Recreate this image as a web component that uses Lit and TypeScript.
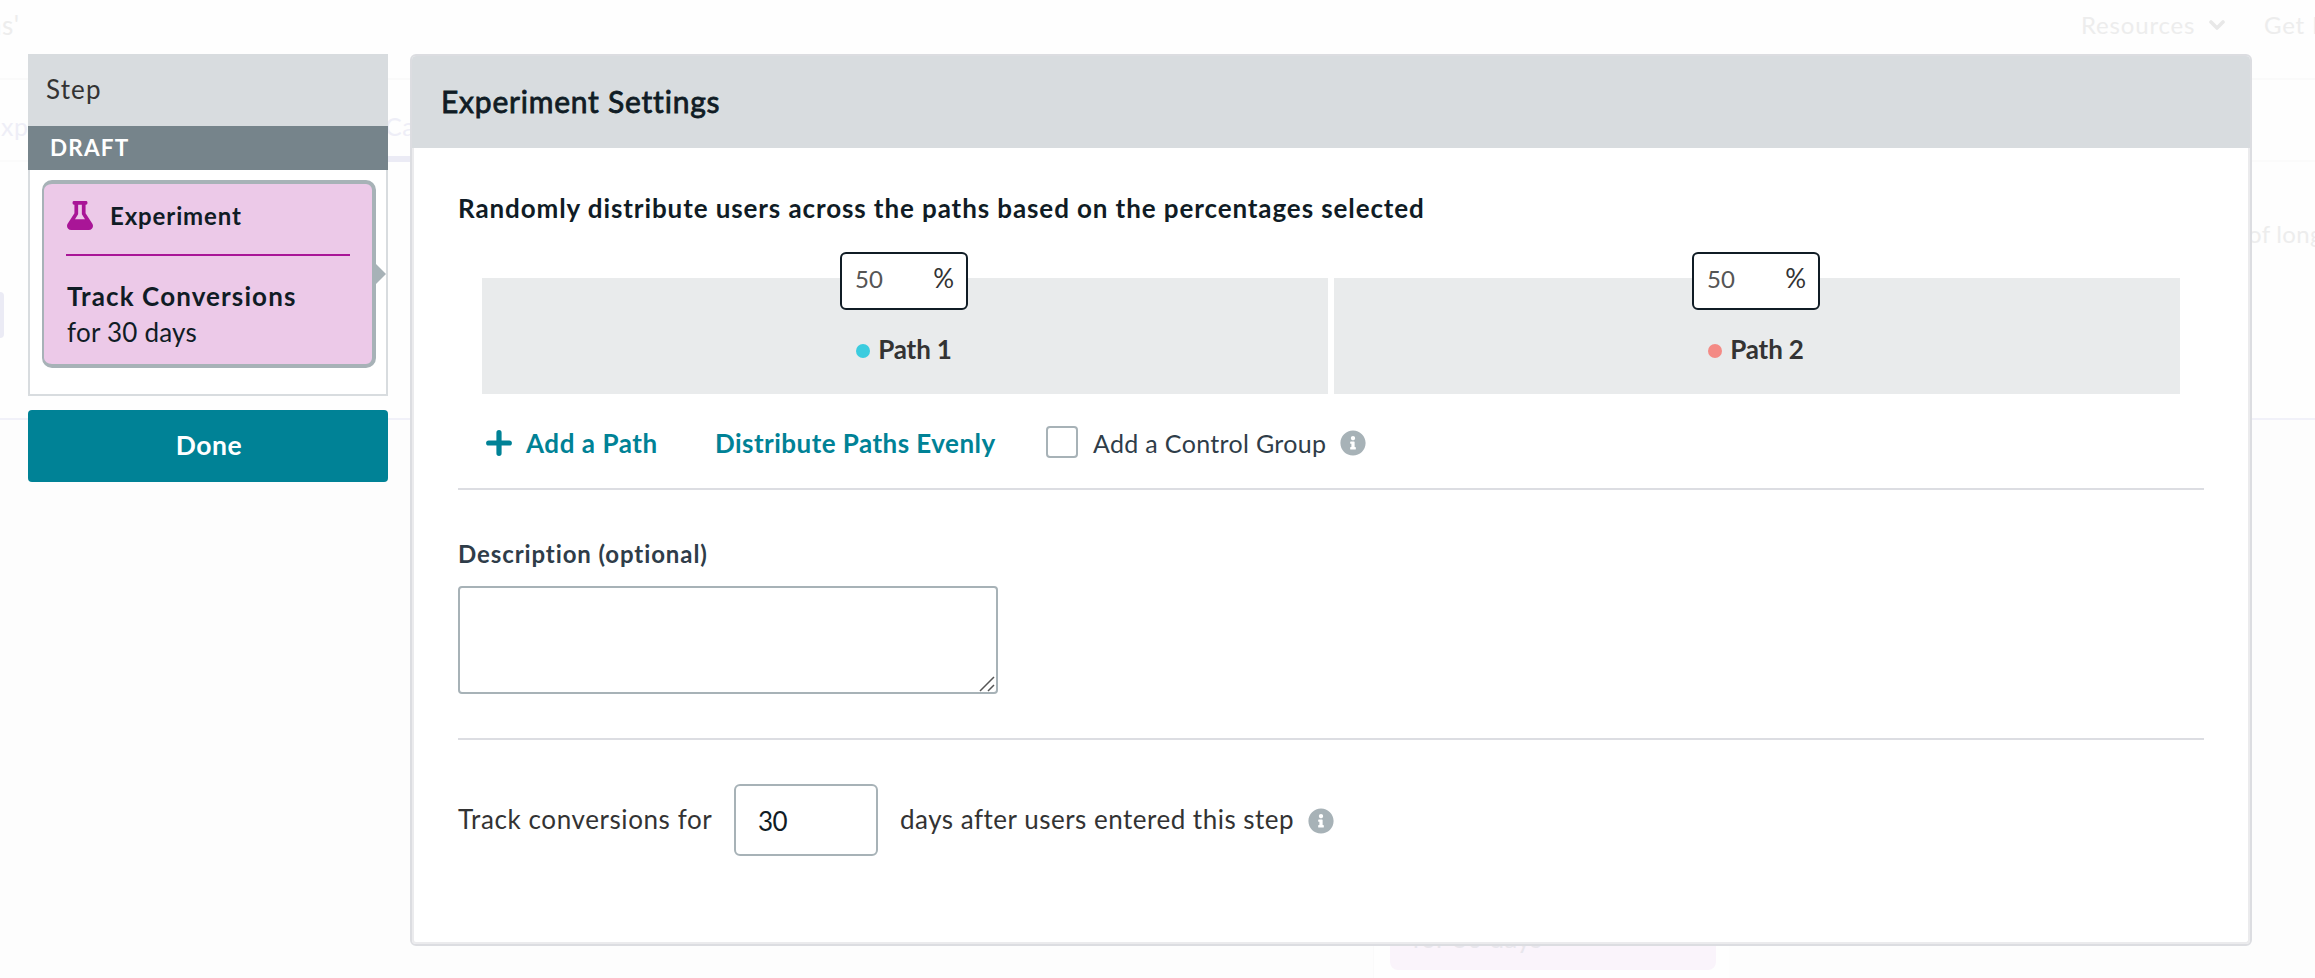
import { LitElement, html, css, svg } from "lit";
import { customElement, property } from "lit/decorators.js";
import { styleMap } from "lit/directives/style-map.js";

const infoIcon = html`<svg width="26" height="26" viewBox="0 0 512 512" fill="#a7b2b7">${svg`<path d="M256 8C119.043 8 8 119.083 8 256c0 136.997 111.043 248 248 248s248-111.003 248-248C504 119.083 392.957 8 256 8zm0 110c23.196 0 42 18.804 42 42s-18.804 42-42 42-42-18.804-42-42 18.804-42 42-42zm56 254c0 6.627-5.373 12-12 12h-88c-6.627 0-12-5.373-12-12v-24c0-6.627 5.373-12 12-12h12v-64h-12c-6.627 0-12-5.373-12-12v-24c0-6.627 5.373-12 12-12h64c6.627 0 12 5.373 12 12v100h12c6.627 0 12 5.373 12 12v24z"/>`}</svg>`;

/* Faded page that shows around the dialog. */
@customElement("page-backdrop")
class PageBackdrop extends LitElement {
  static styles = css`
    :host { display: flex; flex-direction: column; height: 978px; overflow: hidden; background: #fefefe; white-space: nowrap; color: #ededed; font: 400 24px/30px Lato, sans-serif; }
    .top { display: flex; align-items: flex-start; height: 80px; box-sizing: border-box; padding-top: 10px; border-bottom: 2px solid #fafafa; }
    .top > * { flex: none; }
    .title { width: 2081px; text-indent: -13px; letter-spacing: 0.5px; font-size: 26px; }
    .res { letter-spacing: 0.82px; width: 128px; }
    .chev { margin: 9px 39px 0 0; }
    .help { letter-spacing: 0.8px; }
    .tabs { display: flex; height: 82px; box-sizing: border-box; border-bottom: 2px solid #fbfbfb; color: #eeeef7; font-size: 25px; }
    .tab { padding-top: 31px; box-sizing: border-box; height: 82px; letter-spacing: 0.6px; }
    .first { width: 385px; text-indent: -14px; }
    .active { width: 60px; border-bottom: 6px solid #ebebf5; }
    .main { height: 256px; display: flex; justify-content: space-between; border-bottom: 2px solid #f1f1f9; }
    .pill { width: 4px; height: 46px; margin-top: 130px; background: #ebebf5; border-radius: 0 5px 5px 0; }
    .note { width: 67px; padding-top: 57px; font-size: 24px; letter-spacing: 0.3px; }
    .canvas { flex: 1; background: #fdfdfd; display: flex; align-items: flex-end; padding-left: 1373px; }
    .lane { background: #fefefe; height: 100px; width: 356px; padding: 0 0 0 16px; box-sizing: border-box; border-left: 1px solid #fafafa; }
    .node { width: 326px; height: 92px; box-sizing: border-box; padding: 46px 0 0 22px; background: #faf4fb; border-radius: 0 0 8px 8px; color: #e8e6ec; font-size: 26px; line-height: 28px; letter-spacing: 0.23px; }
  `;
  render() {
    return html`
      <div class="top">
        <span class="title">ns'</span><span class="res">Resources</span>
        <svg class="chev" width="16" height="12" viewBox="0 0 16 12"><path d="M2 3l6 6 6-6" fill="none" stroke="#e8e8e8" stroke-width="3.6" stroke-linecap="round" stroke-linejoin="round"/></svg>
        <span class="help">Get H</span>
      </div>
      <div class="tabs"><span class="tab first">Exp</span><span class="tab active">Ca</span></div>
      <div class="main"><span class="pill"></span><span class="note">of long</span></div>
      <div class="canvas"><div class="lane"><div class="node">for 30 days</div></div></div>`;
  }
}

/* Share of users for one path: the number box straddles the top of its bar. */
@customElement("path-share")
class PathShare extends LitElement {
  @property() name = "";
  @property() color = "";
  @property({ type: Number }) share = 50;
  static styles = css`
    :host { display: flex; flex-direction: column; align-items: center; height: 116px; background: #e9ebec; color: #333; font-family: Lato, sans-serif; }
    .box { display: flex; justify-content: space-between; width: 128px; height: 58px; box-sizing: border-box; margin: -26px 2px 0 0; padding: 0 12px 6px 13px; border: 2px solid #101c25; border-radius: 6px; background: #fff; }
    input { width: 60px; padding: 1px 0 0; border: 0; outline: 0; background: none; font: 400 24px Lato, sans-serif; color: #555; }
    .pct { font-size: 26px; line-height: 46px; padding-top: 1px; }
    .label { display: flex; align-items: center; gap: 8px; margin: 23px 2px 0 0; font-weight: 700; font-size: 26px; line-height: 32px; letter-spacing: -0.15px; }
    .dot { width: 14px; height: 14px; margin-top: 4px; border-radius: 50%; }
  `;
  render() {
    return html`
      <div class="box"><input .value=${String(this.share)} /><span class="pct">%</span></div>
      <div class="label"><span class="dot" style=${styleMap({ background: this.color })}></span>${this.name}</div>`;
  }
}

@customElement("app-root")
class AppRoot extends LitElement {
  static styles = css`
    :host { display: block; position: relative; height: 978px; overflow: hidden; font-family: Lato, sans-serif; color: #333; }
    .overlay { position: absolute; inset: 0; display: flex; align-items: flex-start; gap: 22px; padding: 54px 63px 32px 28px; box-sizing: border-box; white-space: nowrap; }
    .side { width: 360px; }
    .step { height: 72px; box-sizing: border-box; padding: 0 0 2px 18px; background: #d8dcdf; font-size: 26px; line-height: 70px; letter-spacing: 1.17px; }
    .draft { height: 44px; padding-left: 22px; background: #76848b; color: #fff; font-weight: 700; font-size: 22.5px; line-height: 44px; letter-spacing: 1.2px; }
    .stack { padding: 10px 10px 26px 12px; border: 2px solid #d8dcdf; border-top: 0; background: #fff; }
    .card { position: relative; padding: 16px 22px 14px; border: 4px solid #a7b2b7; border-left-width: 2px; border-radius: 10px; background: #ecc9e8; color: #101c25; }
    .arrow { position: absolute; right: -14px; top: 80px; }
    .kind { display: flex; align-items: center; gap: 17px; height: 30px; padding-left: 1px; font-weight: 700; font-size: 24px; letter-spacing: 0.88px; }
    .rule { height: 2px; margin: 24px 0 22px; background: #a91597; }
    .goal { padding-left: 1px; font-weight: 700; font-size: 26px; line-height: 36px; letter-spacing: 1.11px; }
    .term { padding-left: 1px; font-size: 26px; line-height: 36px; letter-spacing: 0.23px; }
    .done { display: block; width: 360px; height: 72px; margin-top: 14px; padding: 0 0 2px 2px; border: 0; border-radius: 4px; background: #008296; color: #fff; font: 700 26.5px Lato, sans-serif; letter-spacing: 0.6px; }
    .panel { flex: 1; height: 892px; box-sizing: border-box; border: 2px solid #dcdde1; border-radius: 6px; background: #fff; display: flex; flex-direction: column; }
    .head { height: 92px; box-sizing: border-box; padding: 0 0 2px 29px; background: #d8dcdf; border-radius: 4px 4px 0 0; color: #101c25; font-size: 30px; line-height: 90px; letter-spacing: 0.78px; -webkit-text-stroke: 0.8px #101c25; }
    .body { flex: 1; padding: 44px 44px 0; border: 2px solid #ebebed; border-top: 0; border-radius: 0 0 4px 4px; }
    .lead { color: #101c25; font-weight: 700; font-size: 26px; line-height: 32px; letter-spacing: 0.9px; }
    .bars { display: grid; grid-template-columns: 1fr 1fr; gap: 6px; margin: 54px 24px 0; }
    .actions { display: flex; align-items: center; height: 40px; margin-top: 28px; padding-left: 28px; font-size: 26px; }
    .link { padding-top: 1px; color: #008296; font-weight: 700; }
    .add { margin-left: 14px; width: 189px; letter-spacing: 0.55px; }
    .even { width: 331px; letter-spacing: 0.46px; }
    .check { width: 28px; height: 28px; border: 2px solid #a7b2b7; border-radius: 4px; }
    .control { margin: 0 14px 0 15px; padding-top: 1px; color: #2f3d49; font-size: 25px; letter-spacing: 0.33px; }
    .actions svg, .track svg { margin-top: 2px; }
    .hr { height: 2px; background: #dcdde2; }
    .h1 { margin-top: 26px; }
    .desc { margin: 48px 0 16px; color: #2f3d49; font-weight: 700; font-size: 24px; line-height: 32px; letter-spacing: 0.9px; }
    .area { position: relative; width: 540px; height: 108px; }
    textarea { display: block; width: 540px; height: 108px; box-sizing: border-box; resize: none; border: 2px solid #a7b2b7; border-radius: 4px; background: #fff; }
    .grip { position: absolute; right: 3px; bottom: 2px; }
    .h2 { margin: 44px 0; }
    .track { display: flex; align-items: center; height: 72px; font-size: 26px; }
    .t { padding-bottom: 3px; letter-spacing: 0.6px; }
    .before { width: 276px; }
    .after { margin: 0 14px 0 22px; letter-spacing: 0.5px; }
    .days { width: 144px; height: 72px; box-sizing: border-box; padding: 1px 0 0 22px; border: 2px solid #a7b2b7; border-radius: 6px; background: #fff; color: #101c25; font: 400 26px Lato, sans-serif; letter-spacing: -0.6px; }
  `;
  render() {
    return html`
      <page-backdrop></page-backdrop>
      <div class="overlay">
        <div class="side">
          <div class="step">Step</div>
          <div class="draft">DRAFT</div>
          <div class="stack">
            <div class="card">
              <div class="kind">
                <svg width="26" height="29" viewBox="0 0 448 512" preserveAspectRatio="none" fill="#a91597"><path d="M437.2 403.5L320 215V64h8c13.3 0 24-10.7 24-24V24c0-13.3-10.7-24-24-24H120c-13.3 0-24 10.7-24 24v16c0 13.3 10.7 24 24 24h8v151L10.8 403.5C-18.5 450.6 15.3 512 70.9 512h306.2c55.7 0 89.4-61.5 60.1-108.5zM137.9 320l48.2-77.6c3.7-5.2 5.8-11.6 5.8-18.4V64h64v160c0 6.9 2.2 13.2 5.8 18.4l48.2 77.6h-172z"/></svg>
                <span>Experiment</span>
              </div>
              <div class="rule"></div>
              <div class="goal">Track Conversions</div>
              <div class="term">for 30 days</div>
              <svg class="arrow" width="10" height="20" viewBox="0 0 10 20"><path d="M0 0l10 10L0 20z" fill="#a7b2b7"/></svg>
            </div>
          </div>
          <button class="done">Done</button>
        </div>
        <div class="panel">
          <div class="head">Experiment Settings</div>
          <div class="body">
            <div class="lead">Randomly distribute users across the paths based on the percentages selected</div>
            <div class="bars">
              <path-share name="Path 1" color="#3bccdf"></path-share>
              <path-share name="Path 2" color="#f48a85"></path-share>
            </div>
            <div class="actions">
              <svg width="26" height="26" viewBox="0 0 26 26"><path d="M13 2.7v20.6M2.7 13h20.6" stroke="#008296" stroke-width="5.2" stroke-linecap="round"/></svg>
              <span class="link add">Add a Path</span>
              <span class="link even">Distribute Paths Evenly</span>
              <span class="check"></span>
              <span class="control">Add a Control Group</span>${infoIcon}
            </div>
            <div class="hr h1"></div>
            <div class="desc">Description (optional)</div>
            <div class="area">
              <textarea></textarea>
              <svg class="grip" width="16" height="16" viewBox="0 0 16 16"><path d="M1 15L15 1M9 15l6-6" stroke="#555" stroke-width="1.5"/></svg>
            </div>
            <div class="hr h2"></div>
            <div class="track">
              <span class="t before">Track conversions for</span>
              <input class="days" .value=${"30"} />
              <span class="t after">days after users entered this step</span>${infoIcon}
            </div>
          </div>
        </div>
      </div>`;
  }
}
